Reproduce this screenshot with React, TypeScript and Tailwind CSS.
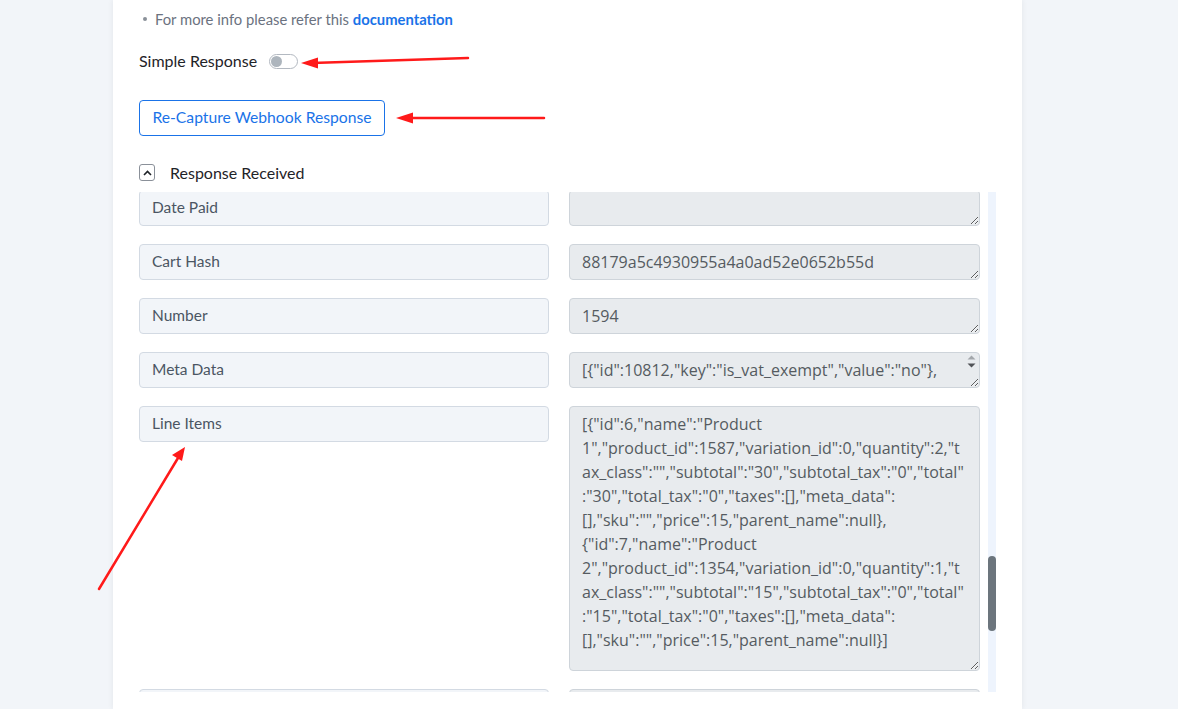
import React, { useEffect, useRef, useState } from "react";

type Field = { label: string; value: string; tall?: boolean; scroll?: boolean };

const hidden: string[] = [
  "Id", "Parent Id", "Status", "Currency", "Version", "Prices Include Tax", "Date Created",
  "Date Modified", "Discount Total", "Discount Tax", "Shipping Total", "Shipping Tax", "Cart Tax",
  "Total", "Total Tax", "Customer Id", "Order Key", "Billing First Name", "Billing Last Name",
  "Billing Company", "Billing Address 1", "Billing Address 2", "Billing City", "Billing State",
  "Billing Postcode", "Billing Country", "Billing Email", "Billing Phone", "Shipping First Name",
  "Shipping Last Name", "Shipping Company", "Shipping Address 1", "Shipping Address 2",
  "Shipping City", "Shipping State", "Shipping Postcode", "Shipping Country", "Payment Method",
  "Payment Method Title", "Transaction Id", "Customer Ip Address", "Customer User Agent",
  "Created Via", "Customer Note", "Date Completed",
];

const after: string[] = [
  "Tax Lines", "Shipping Lines", "Fee Lines", "Coupon Lines", "Refunds",
  "Date Created Gmt", "Date Modified Gmt", "Currency Symbol",
];

const lineItems =
  '[{"id":6,"name":"Product 1","product_id":1587,"variation_id":0,"quantity":2,"tax_class":"","subtotal":"30","subtotal_tax":"0","total":"30","total_tax":"0","taxes":[],"meta_data":[],"sku":"","price":15,"parent_name":null},{"id":7,"name":"Product 2","product_id":1354,"variation_id":0,"quantity":1,"tax_class":"","subtotal":"15","subtotal_tax":"0","total":"15","total_tax":"0","taxes":[],"meta_data":[],"sku":"","price":15,"parent_name":null}]';

const shown: Field[] = [
  { label: "Date Paid", value: "" },
  { label: "Cart Hash", value: "88179a5c4930955a4a0ad52e0652b55d" },
  { label: "Number", value: "1594" },
  {
    label: "Meta Data",
    value:
      '[{"id":10812,"key":"is_vat_exempt","value":"no"},{"id":10827,"key":"_new_order_email_sent","value":"true"}]',
    scroll: true,
  },
  { label: "Line Items", value: lineItems, tall: true },
];

const fields: Field[] = [
  ...hidden.map((l) => ({ label: l, value: "" })),
  ...shown,
  ...after.map((l) => ({ label: l, value: "" })),
];

const FieldRow: React.FC<{ field: Field; rowRef?: React.Ref<HTMLDivElement> }> = ({ field, rowRef }) => (
  <div ref={rowRef} className="flex items-start gap-5">
    <div className="w-[410px] h-9 flex items-center px-3 rounded bg-[#f2f5f9] border border-[#d3dae3] text-[15.5px] text-[#4b5563] font-['Lato',sans-serif]">
      {field.label}
    </div>
    <div className="relative">
      <textarea
        readOnly
        defaultValue={field.value}
        className={`block w-[411px] ${field.tall ? "h-[265px]" : "h-9"} ${field.scroll ? "pl-3 pr-[27px]" : "px-3"} py-[5px] rounded bg-[#e8ebee] border border-[#ced4da] text-[16px] leading-6 text-[#555b61] font-['Open_Sans',sans-serif] outline-none overflow-hidden`}
      />
      {field.scroll && (
        // small native-looking scroll arrows
        <div className="absolute top-[3px] right-[3px] w-[11px] flex flex-col items-center gap-[3px]">
          <svg width="9" height="5" viewBox="0 0 9 5">
            <path d="M0.5 4.5 L4.5 0.5 L8.5 4.5 Z" fill="#a3a7ab" />
          </svg>
          <svg width="9" height="5" viewBox="0 0 9 5">
            <path d="M0.5 0.5 L4.5 4.5 L8.5 0.5 Z" fill="#505357" />
          </svg>
        </div>
      )}
    </div>
  </div>
);

const Annotations: React.FC = () => (
  <svg className="absolute inset-0 pointer-events-none" width="1178" height="709" viewBox="0 0 1178 709">
    <g stroke="#ff1a1a" strokeWidth="2.5" strokeLinecap="round" fill="#ff1a1a">
      <line x1="468" y1="58" x2="312" y2="63" />
      <polygon points="301,63 318,57.5 318,68.5" stroke="none" />
      <line x1="544" y1="118" x2="408" y2="118" />
      <polygon points="396,118 413,112.5 413,123.5" stroke="none" />
      <line x1="99" y1="589" x2="178" y2="458" />
      <polygon points="185,447 172,455 182,461" stroke="none" />
    </g>
  </svg>
);

const App: React.FC = () => {
  const boxRef = useRef<HTMLDivElement>(null);
  const dateRef = useRef<HTMLDivElement>(null);
  const [thumb, setThumb] = useState({ top: 364, height: 72 });

  useEffect(() => {
    // jump the list so "Date Paid" sits just under the top edge
    const box = boxRef.current;
    if (box && dateRef.current) {
      box.scrollTop = dateRef.current.offsetTop + 2;
      const h = box.clientHeight;
      setThumb({
        top: (box.scrollTop / box.scrollHeight) * h,
        height: (h * h) / box.scrollHeight,
      });
    }
  }, []);

  return (
    <div className="relative h-[709px] overflow-hidden bg-[#f2f5f9] font-['Lato',sans-serif]">
      <div className="ml-[113px] w-[909px] h-full bg-white shadow-[0_0_6px_rgba(0,0,0,0.07)] pl-[26px] flex flex-col">
        {/* Info line */}
        <div className="flex items-center gap-[6px] pt-[9px] h-[29px] text-[14.8px] text-[#6b7280]">
          <span className="ml-[4px] w-[4px] h-[4px] rounded-full bg-[#8a9099]" />
          <span className="ml-[2px]">
            For more info please refer this{" "}
            <a className="font-bold text-[#1a73e8]">documentation</a>
          </span>
        </div>

        {/* Simple response toggle */}
        <div className="flex items-center gap-3 mt-[22px] h-5 text-[16px] text-[#1f2328]">
          <span>Simple Response</span>
          <span className="w-[29px] h-[15px] rounded-full border border-[#b3b9c1] flex items-center px-[1px]">
            <span className="w-[11px] h-[11px] rounded-full bg-[#adb5bd]" />
          </span>
        </div>

        {/* Recapture button */}
        <button className="mt-[29px] w-[246px] h-9 rounded border border-[#1a73e8] text-[#1a73e8] text-[15.7px] bg-white">
          Re-Capture Webhook Response
        </button>

        {/* Response received header */}
        <div className="flex items-center gap-[15px] mt-[28px] h-[17px]">
          <span className="w-4 h-[17px] rounded-[3px] border border-[#8a9099] flex items-center justify-center">
            <svg width="9" height="6" viewBox="0 0 9 6">
              <path d="M1 5 L4.5 1.5 L8 5" stroke="#1f2328" strokeWidth="1.6" fill="none" />
            </svg>
          </span>
          <span className="text-[16px] text-[#1f2328]">Response Received</span>
        </div>

        <div className="flex mt-[11px] h-[500px]">
          <div
            ref={boxRef}
            className="relative w-[849px] h-full overflow-hidden"
          >
            <div className="flex flex-col gap-[18px]">
              {fields.map((f) => (
                <FieldRow key={f.label} field={f} rowRef={f.label === "Date Paid" ? dateRef : undefined} />
              ))}
            </div>
          </div>
          <div className="relative w-2 h-full bg-[#eef4fd]">
            <div
              className="absolute left-0 w-2 rounded-full bg-[#6c757d]"
              style={{ top: thumb.top, height: thumb.height }}
            />
          </div>
        </div>
      </div>
      <Annotations />
    </div>
  );
};

export default App;
